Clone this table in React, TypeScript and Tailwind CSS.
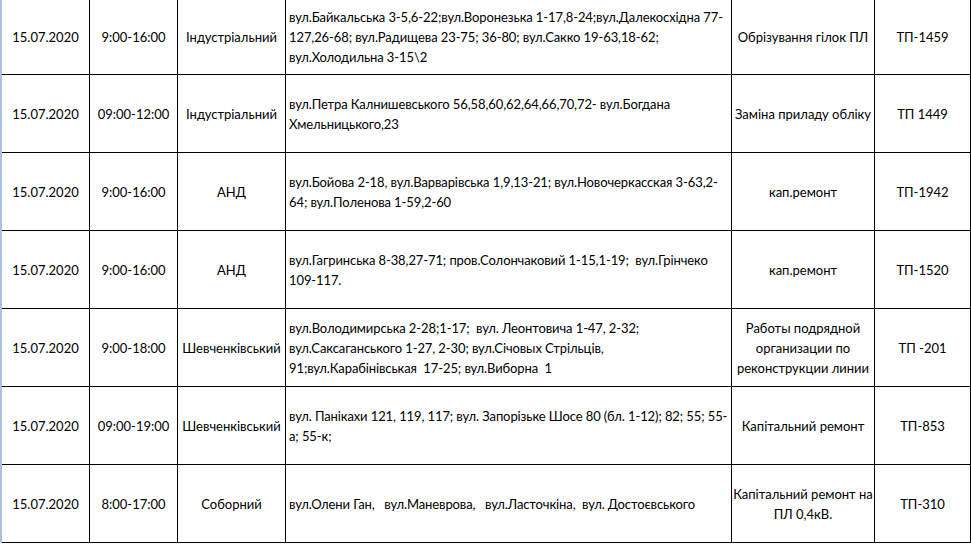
type Row = {
  date: string;
  time: string;
  district: string;
  streets: string[];
  work: string[];
  tp: string;
};

const rows: Row[] = [
  {
    date: "15.07.2020",
    time: "9:00-16:00",
    district: "Індустріальний",
    streets: [
      "вул.Байкальська 3-5,6-22;вул.Воронезька 1-17,8-24;вул.Далекосхідна 77-",
      "127,26-68; вул.Радищева 23-75; 36-80; вул.Сакко 19-63,18-62;",
      "вул.Холодильна 3-15\\2",
    ],
    work: ["Обрізування гілок ПЛ"],
    tp: "ТП-1459",
  },
  {
    date: "15.07.2020",
    time: "09:00-12:00",
    district: "Індустріальний",
    streets: [
      "вул.Петра Калнишевського 56,58,60,62,64,66,70,72- вул.Богдана",
      "Хмельницького,23",
    ],
    work: ["Заміна приладу обліку"],
    tp: "ТП 1449",
  },
  {
    date: "15.07.2020",
    time: "9:00-16:00",
    district: "АНД",
    streets: [
      "вул.Бойова 2-18, вул.Варварівська 1,9,13-21; вул.Новочеркасская 3-63,2-",
      "64; вул.Поленова 1-59,2-60",
    ],
    work: ["кап.ремонт"],
    tp: "ТП-1942",
  },
  {
    date: "15.07.2020",
    time: "9:00-16:00",
    district: "АНД",
    streets: [
      "вул.Гагринська 8-38,27-71; пров.Солончаковий 1-15,1-19;  вул.Грінчеко",
      "109-117.",
    ],
    work: ["кап.ремонт"],
    tp: "ТП-1520",
  },
  {
    date: "15.07.2020",
    time: "9:00-18:00",
    district: "Шевченківський",
    streets: [
      "вул.Володимирська 2-28;1-17;  вул. Леонтовича 1-47, 2-32;",
      "вул.Саксаганського 1-27, 2-30; вул.Січовых Стрільців,",
      "91;вул.Карабінівськая  17-25; вул.Виборна  1",
    ],
    work: ["Работы подрядной", "организации по", "реконструкции линии"],
    tp: "ТП -201",
  },
  {
    date: "15.07.2020",
    time: "09:00-19:00",
    district: "Шевченківський",
    streets: [
      "вул. Панікахи 121, 119, 117; вул. Запорізьке Шосе 80 (бл. 1-12); 82; 55; 55-",
      "а; 55-к;",
    ],
    work: ["Капітальний ремонт"],
    tp: "ТП-853",
  },
  {
    date: "15.07.2020",
    time: "8:00-17:00",
    district: "Соборний",
    streets: ["вул.Олени Ган,   вул.Маневрова,   вул.Ласточкіна,  вул. Достоєвського"],
    work: ["Капітальний ремонт на", "ПЛ 0,4кВ."],
    tp: "ТП-310",
  },
];

const cell =
  "border-r border-b border-black flex flex-col items-center justify-center text-center";

export default function App() {
  return (
    <div className="w-[971px] h-[544px] overflow-hidden bg-white text-black font-['Lato','Liberation_Sans',sans-serif] text-[13px] leading-[20px]">
      {rows.map((r, i) => (
        <div
          key={i}
          className={`grid grid-cols-[2px_88px_88px_108px_446px_143px_96px] ${
            i === 0 ? "h-[75px]" : "h-[78px]"
          }`}
        >
          <div className="bg-[#a9c1dd]" />
          <div className={cell}>{r.date}</div>
          <div className={cell}>{r.time}</div>
          <div className={cell}>{r.district}</div>
          <div className="border-r border-b border-black flex flex-col justify-center pl-[3px] whitespace-pre tracking-[-0.1px]">
            {r.streets.map((s, j) => (
              <span key={j}>{s}</span>
            ))}
          </div>
          <div className={cell}>
            {r.work.map((w, j) => (
              <span key={j} className="whitespace-nowrap">
                {w}
              </span>
            ))}
          </div>
          <div className={cell}>{r.tp}</div>
        </div>
      ))}
    </div>
  );
}
